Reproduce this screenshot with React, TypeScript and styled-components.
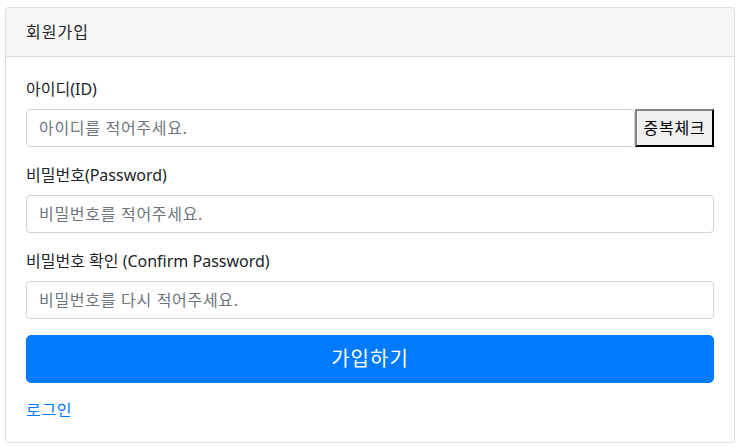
import React, { FC } from 'react';
import styled, { createGlobalStyle } from 'styled-components';

const GlobalStyle = createGlobalStyle`
  html, body {
    margin: 0;
    padding: 0;
    background: #fff;
  }
  body {
    font-family: "Noto Sans", "Noto Sans CJK KR", sans-serif;
    font-size: 16px;
    line-height: 1.5;
    color: #212529;
  }
  * {
    box-sizing: border-box;
  }
`

const StyledPage = styled.div`
  padding: 7px 4px 0 5px;
`

const StyledCard = styled.div`
  border: 1px solid rgba(0, 0, 0, .125);
  border-radius: 4px;
  background: #fff;
`

const StyledCardHeader = styled.div`
  padding: 12px 20px;
  height: 49px;
  background: rgba(0, 0, 0, .03);
  border-bottom: 1px solid rgba(0, 0, 0, .125);
  line-height: 24px;
  letter-spacing: 1px;
`

const StyledCardBody = styled.form`
  padding: 20px 20px 20px;
`

const StyledFormGroup = styled.div`
  margin-bottom: 16px;
`

const StyledLabel = styled.label`
  display: block;
  line-height: 24px;
  margin-bottom: 8px;
`

const StyledInputRow = styled.div`
  display: flex;
`

const StyledInput = styled.input`
  display: block;
  flex: 1;
  width: 100%;
  min-width: 0;
  height: 38px;
  padding: 6px 12px;
  font: inherit;
  color: #495057;
  border: 1px solid #ced4da;
  border-radius: 4px;
  outline: none;

  &::placeholder {
    color: #6c757d;
    letter-spacing: 0.7px;
  }
`

const StyledCheckButton = styled.button`
  width: 79px;
  height: 38px;
  flex-shrink: 0;
  font: inherit;
  font-size: 16px;
  letter-spacing: 0.8px;
  color: #000;
  background: #efefef;
  border: 2px outset #767676;
  border-color: #858585 #1f1f1f #1f1f1f #858585;
  padding: 0;
`

const StyledSubmit = styled.button`
  display: block;
  width: 100%;
  height: 48px;
  font: inherit;
  font-size: 20px;
  letter-spacing: 1px;
  color: #fff;
  background: #007bff;
  border: 1px solid #007bff;
  border-radius: 5px;
  margin-bottom: 15px;
`

const StyledLink = styled.a`
  display: inline-block;
  line-height: 24px;
  letter-spacing: 0.7px;
  color: #007bff;
  text-decoration: none;
`

const App: FC = () => {
  return (
    <>
      <GlobalStyle />
      <StyledPage>
        <StyledCard>
          <StyledCardHeader>회원가입</StyledCardHeader>
          <StyledCardBody onSubmit={e => e.preventDefault()}>
            <StyledFormGroup>
              <StyledLabel>아이디(ID)</StyledLabel>
              <StyledInputRow>
                <StyledInput placeholder="아이디를 적어주세요." />
                <StyledCheckButton type="button">중복체크</StyledCheckButton>
              </StyledInputRow>
            </StyledFormGroup>
            <StyledFormGroup>
              <StyledLabel>비밀번호(Password)</StyledLabel>
              <StyledInput type="password" placeholder="비밀번호를 적어주세요." />
            </StyledFormGroup>
            <StyledFormGroup>
              <StyledLabel>비밀번호 확인 (Confirm Password)</StyledLabel>
              <StyledInput type="password" placeholder="비밀번호를 다시 적어주세요." />
            </StyledFormGroup>
            <StyledSubmit type="submit">가입하기</StyledSubmit>
            <StyledLink href="#">로그인</StyledLink>
          </StyledCardBody>
        </StyledCard>
      </StyledPage>
    </>
  )
}

export default App;
